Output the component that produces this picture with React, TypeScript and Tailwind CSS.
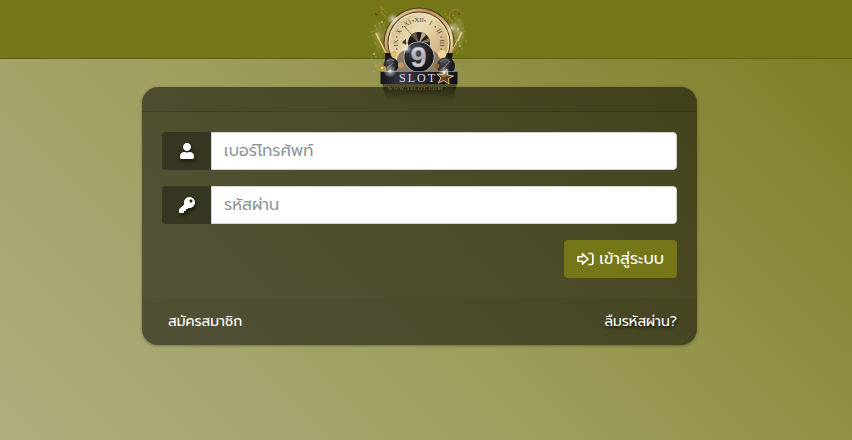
import React from 'react';
import { FaKey, FaUser } from 'react-icons/fa';

const numerals = ['XII', 'I', 'II', 'III', '', '', '', '', '', 'IX', 'X', 'XI'];

const sparkles = [
  [10, 26], [14, 34], [8, 40], [17, 22], [12, 48], [20, 30], [6, 32], [16, 42], [22, 18], [9, 54],
  [13, 60], [85, 18], [90, 24], [94, 20], [88, 32], [96, 34], [92, 40], [86, 42], [98, 28], [84, 26],
  [90, 50], [95, 46], [99, 38], [80, 14], [88, 15], [18, 52], [12, 20], [93, 29], [89, 37], [11, 66],
];

const ClockLogo: React.FC = () => (
  <svg viewBox="0 0 110 110" className="h-[110px] w-[110px]" role="img" aria-label="9 SLOT">
    <defs>
      <linearGradient id="rim" x1="0" y1="0" x2="1" y2="1">
        <stop offset="0" stopColor="#f6e6bd" />
        <stop offset="0.35" stopColor="#b98d58" />
        <stop offset="0.7" stopColor="#f0d5a0" />
        <stop offset="1" stopColor="#7d5a30" />
      </linearGradient>
      <linearGradient id="face" x1="0" y1="0" x2="1" y2="0.6">
        <stop offset="0" stopColor="#cdb88a" />
        <stop offset="0.5" stopColor="#ecdcb4" />
        <stop offset="1" stopColor="#c9ac74" />
      </linearGradient>
      <radialGradient id="ball" cx="0.4" cy="0.3" r="0.8">
        <stop offset="0" stopColor="#55555b" />
        <stop offset="0.5" stopColor="#252529" />
        <stop offset="1" stopColor="#0b0b0d" />
      </radialGradient>
      <linearGradient id="silver" x1="0" y1="0" x2="0" y2="1">
        <stop offset="0" stopColor="#ffffff" />
        <stop offset="0.5" stopColor="#a9a9b1" />
        <stop offset="1" stopColor="#f0f0f3" />
      </linearGradient>
      <linearGradient id="plate" x1="0" y1="0" x2="1" y2="0">
        <stop offset="0" stopColor="#14151c" />
        <stop offset="0.3" stopColor="#3a3945" />
        <stop offset="0.6" stopColor="#1f1e27" />
        <stop offset="1" stopColor="#11121b" />
      </linearGradient>
      <linearGradient id="fade" x1="0" y1="0" x2="0" y2="1">
        <stop offset="0" stopColor="#000" stopOpacity="0.5" />
        <stop offset="1" stopColor="#000" stopOpacity="0" />
      </linearGradient>
      <radialGradient id="glow">
        <stop offset="0" stopColor="#fff" />
        <stop offset="0.3" stopColor="#fff" stopOpacity="0.5" />
        <stop offset="1" stopColor="#fff" stopOpacity="0" />
      </radialGradient>
    </defs>

    {/* Confetti and ribbons */}
    <ellipse cx="93" cy="32" rx="8" ry="17" fill="url(#glow)" opacity="0.35" />
    <ellipse cx="14" cy="36" rx="8" ry="17" fill="url(#glow)" opacity="0.25" />
    {sparkles.map(([x, y], i) => (
      <g key={i}>
        <circle cx={x} cy={y} r={i % 3 === 0 ? 1.1 : 0.6} fill={i % 2 ? '#ded7a5' : '#a58c3c'} opacity="0.7" />
        <circle cx={x + 2} cy={y + 3} r="0.6" fill="#e2dcb8" opacity="0.6" />
        <circle cx={x - 2} cy={y + 5} r="0.5" fill="#e2dcb8" opacity="0.5" />
      </g>
    ))}
    <path d="M22 17q-7-3-6-11q2 5 6 7M85 21q-3-8 3-11M88 10q6-2 8 2" fill="none" stroke="#b58c35" strokeWidth="0.7" />
    <path d="M93 15l2-2M10 14l3 1" stroke="#4b3e14" strokeWidth="1" />

    {/* Clock */}
    <circle cx="54" cy="43" r="35.5" fill="#1e160b" opacity="0.6" />
    <circle cx="54" cy="43" r="34.5" fill="url(#rim)" />
    <circle cx="54" cy="43" r="31.5" fill="#4a341d" />
    <circle cx="54" cy="43" r="30.5" fill="#f2dfb2" />
    <circle cx="54" cy="43" r="29" fill="url(#face)" />
    {numerals.map((numeral, i) => (
      <g key={i} transform={`rotate(${i * 30} 54 43)`}>
        <text x="54" y="22" textAnchor="middle" fontSize="7" fontFamily="Liberation Serif, serif" fill="#5d503c">
          {numeral}
        </text>
        <circle cx="54" cy="20" r="0.8" fill="#6a5a3c" transform="rotate(15 54 43)" />
      </g>
    ))}
    <path d="M54 43L39 26M54 43H37" stroke="#5b5040" strokeWidth="0.7" />
    <path d="M37 42l4-3v6z" fill="#40382c" />
    <circle cx="54" cy="43" r="11" fill="#201a18" />
    <path d="M54 43L46 36a11 11 0 0 1 5-4z" fill="#665747" />
    <path d="M54 43L57 32a11 11 0 0 1 4 3z" fill="#b9a68c" />
    <path d="M54 43l11-1a11 11 0 0 0-1-4z" fill="#847259" />
    <path d="M32 72q-3-20 9-22h26q11 5 8 22z" fill="#8d7a62" />

    {/* Champagne glasses and bottles */}
    <path d="M11 33l11 22M97 32L85 56" stroke="#e6c483" strokeWidth="1.8" />
    <path d="M15 39l8 15M93 41l-8 15" stroke="#8e6829" strokeWidth="1" />
    <path d="M20 53h5l5 10h-10zM82 53h6l-2 10h-8z" fill="#18140f" />
    <circle cx="26" cy="65" r="7.5" fill="url(#ball)" />
    <circle cx="81" cy="66" r="9" fill="url(#ball)" />
    <path d="M22 61q4-3 7 0M75 62q5-4 9-1M78 69l7-8M22 68l6-5" fill="none" stroke="#92949d" strokeWidth="0.9" />
    <circle cx="29" cy="54" r="3.2" fill="#e1bd6c" />
    <circle cx="77" cy="54" r="4" fill="#f0d699" />
    <circle cx="36" cy="65" r="3" fill="#bd9a62" />
    <circle cx="18" cy="69" r="3.2" fill="#c5912f" />
    <circle cx="17" cy="68" r="1.3" fill="#f7d678" />
    <circle cx="72" cy="66" r="2.5" fill="#8a6636" />

    {/* Nine ball */}
    <circle cx="54" cy="57" r="15.5" fill="#c4c4c6" />
    <circle cx="54" cy="57" r="14.7" fill="url(#ball)" />
    <text x="53.5" y="67" textAnchor="middle" fontSize="29" fontWeight="700" fontFamily="Liberation Sans, sans-serif" fill="url(#silver)" stroke="#8d8d93" strokeWidth="0.4">
      9
    </text>

    {/* Name plate with its shadow */}
    <path d="M17 84h75l-4 17H22z" fill="url(#fade)" />
    <rect x="15.5" y="71.5" width="77" height="12.5" fill="url(#plate)" />
    <path d="M16 71.5h76" stroke="#8d8c87" strokeWidth="0.8" />
    <text x="53" y="81.5" textAnchor="middle" fontSize="12" letterSpacing="2" fontFamily="Liberation Serif, serif" fill="#dcdce0">
      SLOT
    </text>
    <path d="M82 69l.5 6 6 1-5 2.5.5 5.500-5-3.500-6 2.500 3-5-4-4 6 .5z" fill="#65471f" stroke="#edc981" strokeWidth="0.9" />
    <text x="50.5" y="90" textAnchor="middle" fontSize="5" letterSpacing="1" fontFamily="Liberation Serif, serif" fill="#a08b38" opacity="0.8">
      WWW.9SLOT.COM
    </text>
    <circle cx="25" cy="71" r="7" fill="url(#glow)" />
    <circle cx="79" cy="72" r="6" fill="url(#glow)" />
    <circle cx="28" cy="19" r="6" fill="url(#glow)" opacity="0.8" />
    <circle cx="87" cy="28" r="6" fill="url(#glow)" opacity="0.7" />
    <circle cx="42" cy="49" r="5" fill="url(#glow)" opacity="0.9" />
  </svg>
);

const SignInIcon: React.FC = () => (
  <svg viewBox="0 0 17 14" className="h-[14px] w-[17px]" fill="none" stroke="currentColor" strokeWidth="1.6" strokeLinejoin="round" strokeLinecap="round" aria-hidden="true">
    <path d="M1 4.800h4.500V1.800L11 7l-5.500 5.200v-3H1z" />
    <path d="M12 1.500h2.200a1.700 1.700 0 0 1 1.700 1.700v7.600a1.700 1.700 0 0 1-1.700 1.700H12" />
  </svg>
);

interface FieldProps {
  id: string;
  type: string;
  placeholder: string;
  icon: React.ReactNode;
}

const Field: React.FC<FieldProps> = ({ id, type, placeholder, icon }) => (
  <div className="flex h-[38px]">
    <label
      htmlFor={id}
      aria-label={placeholder}
      className="flex w-[49px] shrink-0 items-center justify-center rounded-l bg-[#373622] text-white"
    >
      {icon}
    </label>
    <input
      id={id}
      type={type}
      placeholder={placeholder}
      className="min-w-0 flex-1 rounded-r border border-[#ced4da] bg-white px-3 text-base text-gray-700 outline-none placeholder:text-[#8f979b]"
    />
  </div>
);

const App: React.FC = () => {
  const iconStyle = 'h-4 w-4 drop-shadow-[1px_2px_2px_rgba(0,0,0,0.6)]';

  return (
    <div className="min-h-screen bg-[linear-gradient(45deg,#b0ae80_0%,#9d9d5c_45%,#7b7b22_100%)] font-['Prompt','Noto_Sans_Thai','Noto_Sans',sans-serif] text-white">
      <header className="relative h-[59px] border-b border-[#606012] bg-[#757618] pr-[13px]">
        <a href="#" className="relative z-10 mx-auto block w-[110px]">
          <ClockLogo />
        </a>
      </header>

      <main className="pt-7 pr-[13px]">
        <form
          className="mx-auto w-full max-w-[555px] overflow-hidden rounded-2xl bg-black/50 shadow-[0_1px_3px_rgba(0,0,0,0.3)]"
          onSubmit={(e) => e.preventDefault()}
        >
          <div className="h-[25px] border-b border-black/15 bg-black/3" />

          <div className="flex flex-col gap-4 p-5">
            <Field id="phone" type="tel" placeholder="เบอร์โทรศัพท์" icon={<FaUser className={iconStyle} />} />
            <Field id="password" type="password" placeholder="รหัสผ่าน" icon={<FaKey className={iconStyle} />} />
            <button
              type="submit"
              className="flex h-[38px] items-center gap-[5px] self-end rounded bg-[#757618] px-[13px] text-base"
            >
              <SignInIcon />
              เข้าสู่ระบบ
            </button>
          </div>

          <div className="flex h-[47px] items-center justify-between bg-black/3 pr-5 pl-[26px] text-sm">
            <a href="#register">สมัครสมาชิก</a>
            <a href="#forgot" className="[text-shadow:1px_2px_3px_rgba(0,0,0,0.7)]">ลืมรหัสผ่าน?</a>
          </div>
        </form>
      </main>
    </div>
  );
};

export default App;
